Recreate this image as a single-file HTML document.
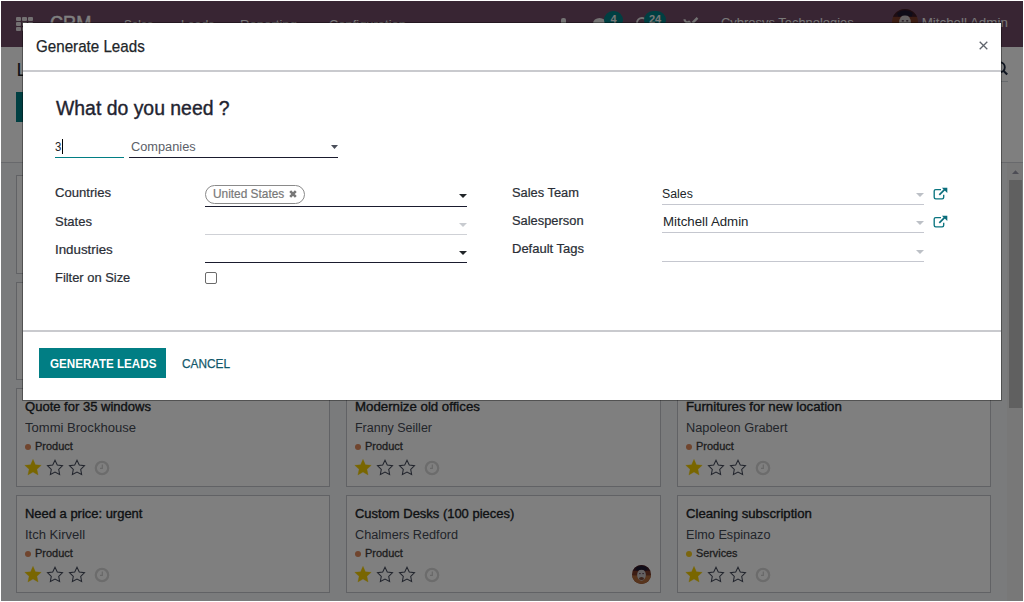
<!DOCTYPE html>
<html><head><meta charset="utf-8">
<style>
*{box-sizing:border-box}
html,body{margin:0;padding:0;background:#fff}
body{width:1024px;height:602px;position:relative;overflow:hidden;font-family:"Liberation Sans",sans-serif;color:#212529}
#scr{position:absolute;left:0;top:0;width:1024px;height:602px;clip-path:inset(1px 1px 1px 1px);background:#fff;overflow:hidden}
.a{position:absolute;white-space:nowrap;margin:0;padding:0}
.card{position:absolute;width:315px;height:99px;background:#fff;border:1px solid #c3c5cb}
</style></head><body>
<div id="scr">

<div class="a" style="left:0;top:0;width:1024px;height:47px;background:#714b67"></div>
<div class="a" style="left:16px;top:17px;width:5px;height:4px;background:#e6e0e4;border-radius:1px"></div>
<div class="a" style="left:16px;top:22px;width:5px;height:4px;background:#e6e0e4;border-radius:1px"></div>
<div class="a" style="left:16px;top:27px;width:5px;height:4px;background:#e6e0e4;border-radius:1px"></div>
<div class="a" style="left:22px;top:17px;width:5px;height:4px;background:#e6e0e4;border-radius:1px"></div>
<div class="a" style="left:22px;top:22px;width:5px;height:4px;background:#e6e0e4;border-radius:1px"></div>
<div class="a" style="left:22px;top:27px;width:5px;height:4px;background:#e6e0e4;border-radius:1px"></div>
<div class="a" style="left:28px;top:17px;width:5px;height:4px;background:#e6e0e4;border-radius:1px"></div>
<div class="a" style="left:28px;top:22px;width:5px;height:4px;background:#e6e0e4;border-radius:1px"></div>
<div class="a" style="left:28px;top:27px;width:5px;height:4px;background:#e6e0e4;border-radius:1px"></div>
<div class="a" style="left:49.70px;top:13.12px;font-size:20.64px;line-height:20.64px;color:#fff;-webkit-text-stroke:0.45px #fff;transform:scaleX(0.8796);transform-origin:0 0;">CRM</div>
<div class="a" style="left:124.40px;top:17.88px;font-size:13.37px;line-height:13.37px;color:#f2f2f2;transform:scaleX(0.8675);transform-origin:0 0;">Sales</div>
<div class="a" style="left:180.60px;top:17.88px;font-size:13.37px;line-height:13.37px;color:#f2f2f2;transform:scaleX(0.9166);transform-origin:0 0;">Leads</div>
<div class="a" style="left:240.00px;top:17.88px;font-size:13.37px;line-height:13.37px;color:#f2f2f2;transform:scaleX(0.9833);transform-origin:0 0;">Reporting</div>
<div class="a" style="left:329.00px;top:17.88px;font-size:13.37px;line-height:13.37px;color:#f2f2f2;transform:scaleX(0.9678);transform-origin:0 0;">Configuration</div>
<div class="a" style="left:720.60px;top:16.18px;font-size:13.37px;line-height:13.37px;color:#f2f2f2;transform:scaleX(0.9682);transform-origin:0 0;">Cybrosys Technologies</div>
<div class="a" style="left:921.70px;top:15.88px;font-size:13.37px;line-height:13.37px;color:#f2f2f2;">Mitchell Admin</div>
<div class="a" style="left:892px;top:9px;width:26px;height:26px;border-radius:50%;overflow:hidden"><svg width="26" height="26" viewBox="0 0 20 20" style="display:block"><rect width="20" height="20" fill="#7a3a28"/><rect x="0" y="0" width="20" height="6" fill="#3a1a28"/><rect x="0" y="11" width="20" height="9" fill="#b06a3a"/><ellipse cx="10" cy="10.5" rx="4.6" ry="6" fill="#c8c2c4"/><rect x="7.5" y="8.6" width="1.6" height="1" fill="#4a3040"/><rect x="10.9" y="8.6" width="1.6" height="1" fill="#4a3040"/><ellipse cx="10" cy="14.2" rx="2.6" ry="1.6" fill="#7a4a3a"/><path d="M4 3 Q10 -1 16 3 L15 6 Q10 4 5 6z" fill="#1e1830"/></svg></div>
<div class="a" style="left:561px;top:18px;width:5px;height:12px;background:#e6e6e6;border-radius:2px"></div>
<div class="a" style="left:593px;top:17.7px;width:13px;height:11px;background:#e6e6e6;border-radius:50%"></div>
<div class="a" style="left:604px;top:10.8px;width:19px;height:18px;background:#017e84;border-radius:9px"></div>
<div class="a" style="left:610.50px;top:14.49px;font-size:11.00px;line-height:11.00px;color:#f0f0f0;font-weight:bold;">4</div>
<div class="a" style="left:636px;top:17px;width:12px;height:12px;border:2px solid #e6e6e6;border-radius:50%"></div>
<div class="a" style="left:644px;top:10.8px;width:22px;height:18px;background:#017e84;border-radius:9px"></div>
<div class="a" style="left:649.00px;top:13.99px;font-size:11.00px;line-height:11.00px;color:#f0f0f0;font-weight:bold;">24</div>
<svg class="a" style="left:683px;top:16px" width="16" height="14" viewBox="0 0 16 14"><path d="M1.5 3.2a3 3 0 0 0 4.6 2.6l6 6" fill="none" stroke="#e6e6e6" stroke-width="2.2"/><path d="M14.5 1.8L9.5 6.8M8.5 7.8L4 12.3" stroke="#e6e6e6" stroke-width="2.4"/></svg>
<div class="a" style="left:16.50px;top:59.91px;font-size:19.00px;line-height:19.00px;color:#212529;">Leads</div>
<div class="a" style="left:16px;top:92px;width:110px;height:30px;background:#017e84"></div>
<svg class="a" style="left:990px;top:60px" width="20" height="16" viewBox="0 0 20 16"><circle cx="9.8" cy="7.2" r="5" fill="none" stroke="#1e2a40" stroke-width="1.9"/><path d="M13.4 10.8l3.8 3.6" stroke="#1e2a40" stroke-width="2.1"/></svg>
<div class="a" style="left:700px;top:81px;width:308px;height:1px;background:#ced4da"></div>
<div class="a" style="left:0;top:162px;width:1024px;height:1px;background:#d0d3d8"></div>
<div class="a" style="left:0;top:163px;width:1024px;height:439px;background:#f5f6f9"></div>
<div class="a" style="left:1007px;top:163px;width:16px;height:439px;background:#f1f1f1"></div>
<svg class="a" style="left:1011px;top:169px" width="9" height="6" viewBox="0 0 9 6"><path d="M1 5L4.5 1.2 8 5z" fill="#9a9aaa"/></svg>
<div class="a" style="left:1009px;top:180px;width:13px;height:228px;background:#c1c1c1"></div>
<div class="card" style="left:16px;top:175px;height:99px;width:314px"></div>
<div class="card" style="left:346px;top:175px;height:99px;width:315px"></div>
<div class="card" style="left:677px;top:175px;height:99px;width:314px"></div>
<div class="card" style="left:16px;top:282px;height:98px;width:314px"></div>
<div class="card" style="left:346px;top:282px;height:98px;width:315px"></div>
<div class="card" style="left:677px;top:282px;height:98px;width:314px"></div>
<div class="card" style="left:16px;top:388px;height:99px;width:314px"></div>
<div class="a" style="left:24.80px;top:400.94px;font-size:12.35px;line-height:12.35px;color:#212529;-webkit-text-stroke:0.35px #212529;transform:scaleX(1.0555);transform-origin:0 0;">Quote for 35 windows</div>
<div class="a" style="left:24.80px;top:421.25px;font-size:13.52px;line-height:13.52px;color:#454a55;transform:scaleX(0.9655);transform-origin:0 0;">Tommi Brockhouse</div>
<div class="a" style="left:25px;top:444px;width:6px;height:6px;border-radius:50%;background:#e08a5c"></div>
<div class="a" style="left:35.30px;top:441.22px;font-size:10.61px;line-height:10.61px;color:#3c3c3c;-webkit-text-stroke:0.3px #3c3c3c;transform:scaleX(1.0341);transform-origin:0 0;">Product</div>
<svg class="a" style="left:23.049999999999997px;top:457.8px" width="20" height="20" viewBox="0 0 20 20"><path d="M10.00 1.30L12.41 6.68L18.27 7.31L13.90 11.27L15.11 17.04L10.00 14.10L4.89 17.04L6.10 11.27L1.73 7.31L7.59 6.68Z" fill="#f3cc00" stroke="#f3cc00" stroke-width="0.3" stroke-linejoin="round"/></svg>
<svg class="a" style="left:45px;top:457.8px" width="20" height="20" viewBox="0 0 20 20"><path d="M10.00 2.20L12.29 6.94L17.51 7.66L13.71 11.31L14.64 16.49L10.00 14.00L5.36 16.49L6.29 11.31L2.49 7.66L7.71 6.94Z" fill="none" stroke="#464c5c" stroke-width="1.05" stroke-linejoin="miter"/></svg>
<svg class="a" style="left:67px;top:457.8px" width="20" height="20" viewBox="0 0 20 20"><path d="M10.00 2.20L12.29 6.94L17.51 7.66L13.71 11.31L14.64 16.49L10.00 14.00L5.36 16.49L6.29 11.31L2.49 7.66L7.71 6.94Z" fill="none" stroke="#464c5c" stroke-width="1.05" stroke-linejoin="miter"/></svg>
<svg class="a" style="left:92.1px;top:457.8px" width="20" height="20" viewBox="0 0 20 20"><circle cx="10" cy="10" r="6.2" fill="none" stroke="#d8d8d8" stroke-width="2.3"/><path d="M10.3 6.4v3.9H8" fill="none" stroke="#d0d0d0" stroke-width="1.2"/></svg>
<div class="card" style="left:346px;top:388px;height:99px;width:315px"></div>
<div class="a" style="left:354.80px;top:400.94px;font-size:12.35px;line-height:12.35px;color:#212529;-webkit-text-stroke:0.35px #212529;transform:scaleX(1.0729);transform-origin:0 0;">Modernize old offices</div>
<div class="a" style="left:354.80px;top:421.25px;font-size:13.52px;line-height:13.52px;color:#454a55;transform:scaleX(0.9232);transform-origin:0 0;">Franny Seiller</div>
<div class="a" style="left:355px;top:444px;width:6px;height:6px;border-radius:50%;background:#e08a5c"></div>
<div class="a" style="left:365.30px;top:441.22px;font-size:10.61px;line-height:10.61px;color:#3c3c3c;-webkit-text-stroke:0.3px #3c3c3c;transform:scaleX(1.0341);transform-origin:0 0;">Product</div>
<svg class="a" style="left:353.05px;top:457.8px" width="20" height="20" viewBox="0 0 20 20"><path d="M10.00 1.30L12.41 6.68L18.27 7.31L13.90 11.27L15.11 17.04L10.00 14.10L4.89 17.04L6.10 11.27L1.73 7.31L7.59 6.68Z" fill="#f3cc00" stroke="#f3cc00" stroke-width="0.3" stroke-linejoin="round"/></svg>
<svg class="a" style="left:375px;top:457.8px" width="20" height="20" viewBox="0 0 20 20"><path d="M10.00 2.20L12.29 6.94L17.51 7.66L13.71 11.31L14.64 16.49L10.00 14.00L5.36 16.49L6.29 11.31L2.49 7.66L7.71 6.94Z" fill="none" stroke="#464c5c" stroke-width="1.05" stroke-linejoin="miter"/></svg>
<svg class="a" style="left:397px;top:457.8px" width="20" height="20" viewBox="0 0 20 20"><path d="M10.00 2.20L12.29 6.94L17.51 7.66L13.71 11.31L14.64 16.49L10.00 14.00L5.36 16.49L6.29 11.31L2.49 7.66L7.71 6.94Z" fill="none" stroke="#464c5c" stroke-width="1.05" stroke-linejoin="miter"/></svg>
<svg class="a" style="left:422.1px;top:457.8px" width="20" height="20" viewBox="0 0 20 20"><circle cx="10" cy="10" r="6.2" fill="none" stroke="#d8d8d8" stroke-width="2.3"/><path d="M10.3 6.4v3.9H8" fill="none" stroke="#d0d0d0" stroke-width="1.2"/></svg>
<div class="card" style="left:677px;top:388px;height:99px;width:314px"></div>
<div class="a" style="left:685.80px;top:400.94px;font-size:12.35px;line-height:12.35px;color:#212529;-webkit-text-stroke:0.35px #212529;transform:scaleX(1.0714);transform-origin:0 0;">Furnitures for new location</div>
<div class="a" style="left:685.80px;top:421.25px;font-size:13.52px;line-height:13.52px;color:#454a55;transform:scaleX(0.9445);transform-origin:0 0;">Napoleon Grabert</div>
<div class="a" style="left:686px;top:444px;width:6px;height:6px;border-radius:50%;background:#e08a5c"></div>
<div class="a" style="left:696.30px;top:441.22px;font-size:10.61px;line-height:10.61px;color:#3c3c3c;-webkit-text-stroke:0.3px #3c3c3c;transform:scaleX(1.0341);transform-origin:0 0;">Product</div>
<svg class="a" style="left:684.05px;top:457.8px" width="20" height="20" viewBox="0 0 20 20"><path d="M10.00 1.30L12.41 6.68L18.27 7.31L13.90 11.27L15.11 17.04L10.00 14.10L4.89 17.04L6.10 11.27L1.73 7.31L7.59 6.68Z" fill="#f3cc00" stroke="#f3cc00" stroke-width="0.3" stroke-linejoin="round"/></svg>
<svg class="a" style="left:706px;top:457.8px" width="20" height="20" viewBox="0 0 20 20"><path d="M10.00 2.20L12.29 6.94L17.51 7.66L13.71 11.31L14.64 16.49L10.00 14.00L5.36 16.49L6.29 11.31L2.49 7.66L7.71 6.94Z" fill="none" stroke="#464c5c" stroke-width="1.05" stroke-linejoin="miter"/></svg>
<svg class="a" style="left:728px;top:457.8px" width="20" height="20" viewBox="0 0 20 20"><path d="M10.00 2.20L12.29 6.94L17.51 7.66L13.71 11.31L14.64 16.49L10.00 14.00L5.36 16.49L6.29 11.31L2.49 7.66L7.71 6.94Z" fill="none" stroke="#464c5c" stroke-width="1.05" stroke-linejoin="miter"/></svg>
<svg class="a" style="left:753.1px;top:457.8px" width="20" height="20" viewBox="0 0 20 20"><circle cx="10" cy="10" r="6.2" fill="none" stroke="#d8d8d8" stroke-width="2.3"/><path d="M10.3 6.4v3.9H8" fill="none" stroke="#d0d0d0" stroke-width="1.2"/></svg>
<div class="card" style="left:16px;top:495px;height:98px;width:314px"></div>
<div class="a" style="left:24.80px;top:507.94px;font-size:12.35px;line-height:12.35px;color:#212529;-webkit-text-stroke:0.35px #212529;transform:scaleX(1.0497);transform-origin:0 0;">Need a price: urgent</div>
<div class="a" style="left:24.80px;top:528.25px;font-size:13.52px;line-height:13.52px;color:#454a55;transform:scaleX(0.9628);transform-origin:0 0;">Itch Kirvell</div>
<div class="a" style="left:25px;top:551px;width:6px;height:6px;border-radius:50%;background:#e08a5c"></div>
<div class="a" style="left:35.30px;top:548.22px;font-size:10.61px;line-height:10.61px;color:#3c3c3c;-webkit-text-stroke:0.3px #3c3c3c;transform:scaleX(1.0341);transform-origin:0 0;">Product</div>
<svg class="a" style="left:23.049999999999997px;top:564.8px" width="20" height="20" viewBox="0 0 20 20"><path d="M10.00 1.30L12.41 6.68L18.27 7.31L13.90 11.27L15.11 17.04L10.00 14.10L4.89 17.04L6.10 11.27L1.73 7.31L7.59 6.68Z" fill="#f3cc00" stroke="#f3cc00" stroke-width="0.3" stroke-linejoin="round"/></svg>
<svg class="a" style="left:45px;top:564.8px" width="20" height="20" viewBox="0 0 20 20"><path d="M10.00 2.20L12.29 6.94L17.51 7.66L13.71 11.31L14.64 16.49L10.00 14.00L5.36 16.49L6.29 11.31L2.49 7.66L7.71 6.94Z" fill="none" stroke="#464c5c" stroke-width="1.05" stroke-linejoin="miter"/></svg>
<svg class="a" style="left:67px;top:564.8px" width="20" height="20" viewBox="0 0 20 20"><path d="M10.00 2.20L12.29 6.94L17.51 7.66L13.71 11.31L14.64 16.49L10.00 14.00L5.36 16.49L6.29 11.31L2.49 7.66L7.71 6.94Z" fill="none" stroke="#464c5c" stroke-width="1.05" stroke-linejoin="miter"/></svg>
<svg class="a" style="left:92.1px;top:564.8px" width="20" height="20" viewBox="0 0 20 20"><circle cx="10" cy="10" r="6.2" fill="none" stroke="#d8d8d8" stroke-width="2.3"/><path d="M10.3 6.4v3.9H8" fill="none" stroke="#d0d0d0" stroke-width="1.2"/></svg>
<div class="card" style="left:346px;top:495px;height:98px;width:315px"></div>
<div class="a" style="left:354.80px;top:507.94px;font-size:12.35px;line-height:12.35px;color:#212529;-webkit-text-stroke:0.35px #212529;transform:scaleX(1.0502);transform-origin:0 0;">Custom Desks (100 pieces)</div>
<div class="a" style="left:354.80px;top:528.25px;font-size:13.52px;line-height:13.52px;color:#454a55;transform:scaleX(0.9390);transform-origin:0 0;">Chalmers Redford</div>
<div class="a" style="left:355px;top:551px;width:6px;height:6px;border-radius:50%;background:#e08a5c"></div>
<div class="a" style="left:365.30px;top:548.22px;font-size:10.61px;line-height:10.61px;color:#3c3c3c;-webkit-text-stroke:0.3px #3c3c3c;transform:scaleX(1.0341);transform-origin:0 0;">Product</div>
<svg class="a" style="left:353.05px;top:564.8px" width="20" height="20" viewBox="0 0 20 20"><path d="M10.00 1.30L12.41 6.68L18.27 7.31L13.90 11.27L15.11 17.04L10.00 14.10L4.89 17.04L6.10 11.27L1.73 7.31L7.59 6.68Z" fill="#f3cc00" stroke="#f3cc00" stroke-width="0.3" stroke-linejoin="round"/></svg>
<svg class="a" style="left:375px;top:564.8px" width="20" height="20" viewBox="0 0 20 20"><path d="M10.00 2.20L12.29 6.94L17.51 7.66L13.71 11.31L14.64 16.49L10.00 14.00L5.36 16.49L6.29 11.31L2.49 7.66L7.71 6.94Z" fill="none" stroke="#464c5c" stroke-width="1.05" stroke-linejoin="miter"/></svg>
<svg class="a" style="left:397px;top:564.8px" width="20" height="20" viewBox="0 0 20 20"><path d="M10.00 2.20L12.29 6.94L17.51 7.66L13.71 11.31L14.64 16.49L10.00 14.00L5.36 16.49L6.29 11.31L2.49 7.66L7.71 6.94Z" fill="none" stroke="#464c5c" stroke-width="1.05" stroke-linejoin="miter"/></svg>
<svg class="a" style="left:422.1px;top:564.8px" width="20" height="20" viewBox="0 0 20 20"><circle cx="10" cy="10" r="6.2" fill="none" stroke="#d8d8d8" stroke-width="2.3"/><path d="M10.3 6.4v3.9H8" fill="none" stroke="#d0d0d0" stroke-width="1.2"/></svg>
<div class="a" style="left:632px;top:565px;width:19px;height:19px;border-radius:50%;overflow:hidden"><svg width="19" height="19" viewBox="0 0 20 20" style="display:block"><rect width="20" height="20" fill="#7a3a28"/><rect x="0" y="0" width="20" height="6" fill="#3a1a28"/><rect x="0" y="11" width="20" height="9" fill="#b06a3a"/><ellipse cx="10" cy="10.5" rx="4.6" ry="6" fill="#c8c2c4"/><rect x="7.5" y="8.6" width="1.6" height="1" fill="#4a3040"/><rect x="10.9" y="8.6" width="1.6" height="1" fill="#4a3040"/><ellipse cx="10" cy="14.2" rx="2.6" ry="1.6" fill="#7a4a3a"/><path d="M4 3 Q10 -1 16 3 L15 6 Q10 4 5 6z" fill="#1e1830"/></svg></div>
<div class="card" style="left:677px;top:495px;height:98px;width:314px"></div>
<div class="a" style="left:685.80px;top:507.94px;font-size:12.35px;line-height:12.35px;color:#212529;-webkit-text-stroke:0.35px #212529;transform:scaleX(1.0668);transform-origin:0 0;">Cleaning subscription</div>
<div class="a" style="left:685.80px;top:528.25px;font-size:13.52px;line-height:13.52px;color:#454a55;transform:scaleX(0.9372);transform-origin:0 0;">Elmo Espinazo</div>
<div class="a" style="left:686px;top:551px;width:6px;height:6px;border-radius:50%;background:#f7cd1f"></div>
<div class="a" style="left:696.30px;top:548.22px;font-size:10.61px;line-height:10.61px;color:#3c3c3c;-webkit-text-stroke:0.3px #3c3c3c;transform:scaleX(1.0199);transform-origin:0 0;">Services</div>
<svg class="a" style="left:684.05px;top:564.8px" width="20" height="20" viewBox="0 0 20 20"><path d="M10.00 1.30L12.41 6.68L18.27 7.31L13.90 11.27L15.11 17.04L10.00 14.10L4.89 17.04L6.10 11.27L1.73 7.31L7.59 6.68Z" fill="#f3cc00" stroke="#f3cc00" stroke-width="0.3" stroke-linejoin="round"/></svg>
<svg class="a" style="left:706px;top:564.8px" width="20" height="20" viewBox="0 0 20 20"><path d="M10.00 2.20L12.29 6.94L17.51 7.66L13.71 11.31L14.64 16.49L10.00 14.00L5.36 16.49L6.29 11.31L2.49 7.66L7.71 6.94Z" fill="none" stroke="#464c5c" stroke-width="1.05" stroke-linejoin="miter"/></svg>
<svg class="a" style="left:728px;top:564.8px" width="20" height="20" viewBox="0 0 20 20"><path d="M10.00 2.20L12.29 6.94L17.51 7.66L13.71 11.31L14.64 16.49L10.00 14.00L5.36 16.49L6.29 11.31L2.49 7.66L7.71 6.94Z" fill="none" stroke="#464c5c" stroke-width="1.05" stroke-linejoin="miter"/></svg>
<svg class="a" style="left:753.1px;top:564.8px" width="20" height="20" viewBox="0 0 20 20"><circle cx="10" cy="10" r="6.2" fill="none" stroke="#d8d8d8" stroke-width="2.3"/><path d="M10.3 6.4v3.9H8" fill="none" stroke="#d0d0d0" stroke-width="1.2"/></svg>
<div class="a" style="left:0;top:0;width:1024px;height:602px;background:rgba(0,0,0,.5)"></div>
<div class="a" style="left:22px;top:22px;width:980px;height:379px;background:#fff;background-clip:padding-box;border:1px solid rgba(0,0,0,.35)"></div>
<div class="a" style="left:35.75px;top:38.20px;font-size:17.01px;line-height:17.01px;color:#212529;-webkit-text-stroke:0.25px #212529;transform:scaleX(0.8919);transform-origin:0 0;">Generate Leads</div>
<svg class="a" style="left:979px;top:41px" width="9" height="9" viewBox="0 0 9 9"><path d="M0.7 0.7L8.3 8.3M8.3 0.7L0.7 8.3" stroke="#5f646c" stroke-width="1.3"/></svg>
<div class="a" style="left:23px;top:70px;width:978px;height:2px;background:#c9cace"></div>
<div class="a" style="left:55.60px;top:97.67px;font-size:20.35px;line-height:20.35px;color:#1f2430;-webkit-text-stroke:0.4px #1f2430;transform:scaleX(0.9537);transform-origin:0 0;">What do you need ?</div>
<div class="a" style="left:55.30px;top:139.68px;font-size:13.37px;line-height:13.37px;color:#212529;transform:scaleX(0.8489);transform-origin:0 0;">3</div>
<div class="a" style="left:62px;top:139px;width:1px;height:15px;background:#000"></div>
<div class="a" style="left:55px;top:157px;width:69px;height:1px;background:#017e84"></div>
<div class="a" style="left:130.60px;top:139.80px;font-size:13.23px;line-height:13.23px;color:#5c6068;transform:scaleX(0.9667);transform-origin:0 0;">Companies</div>
<div class="a" style="left:129px;top:157px;width:209px;height:1px;background:#1a1b2e"></div>
<svg class="a" style="left:331px;top:145px" width="7" height="4" viewBox="0 0 7 4"><path d="M0 0h7L3.5 4z" fill="#4a4f5a"/></svg>
<div class="a" style="left:54.70px;top:185.68px;font-size:13.37px;line-height:13.37px;color:#2a2e36;-webkit-text-stroke:0.22px #2a2e36;transform:scaleX(0.9802);transform-origin:0 0;">Countries</div>
<div class="a" style="left:54.70px;top:214.88px;font-size:13.37px;line-height:13.37px;color:#2a2e36;-webkit-text-stroke:0.22px #2a2e36;transform:scaleX(0.9760);transform-origin:0 0;">States</div>
<div class="a" style="left:54.70px;top:242.90px;font-size:13.23px;line-height:13.23px;color:#2a2e36;-webkit-text-stroke:0.22px #2a2e36;transform:scaleX(1.0080);transform-origin:0 0;">Industries</div>
<div class="a" style="left:54.70px;top:271.00px;font-size:13.23px;line-height:13.23px;color:#2a2e36;-webkit-text-stroke:0.22px #2a2e36;transform:scaleX(0.9756);transform-origin:0 0;">Filter on Size</div>
<div class="a" style="left:511.90px;top:185.55px;font-size:13.52px;line-height:13.52px;color:#2a2e36;-webkit-text-stroke:0.22px #2a2e36;transform:scaleX(0.9508);transform-origin:0 0;">Sales Team</div>
<div class="a" style="left:511.90px;top:213.82px;font-size:13.08px;line-height:13.08px;color:#2a2e36;-webkit-text-stroke:0.22px #2a2e36;transform:scaleX(0.9844);transform-origin:0 0;">Salesperson</div>
<div class="a" style="left:511.90px;top:242.57px;font-size:12.79px;line-height:12.79px;color:#2a2e36;-webkit-text-stroke:0.22px #2a2e36;transform:scaleX(1.0175);transform-origin:0 0;">Default Tags</div>
<div class="a" style="left:205px;top:185px;width:100px;height:19px;border:1px solid #8a8a8a;border-radius:10px"></div>
<div class="a" style="left:212.70px;top:188.07px;font-size:12.79px;line-height:12.79px;color:#787878;-webkit-text-stroke:0.2px #787878;transform:scaleX(0.9283);transform-origin:0 0;">United States</div>
<svg class="a" style="left:289px;top:190px" width="8" height="8" viewBox="0 0 8 8"><path d="M1.2 1.2L6.8 6.8M6.8 1.2L1.2 6.8" stroke="#777" stroke-width="2.6"/></svg>
<div class="a" style="left:205px;top:206px;width:262px;height:1px;background:#1a1b2e"></div>
<svg class="a" style="left:459px;top:194px" width="8" height="4" viewBox="0 0 8 4"><path d="M0 0h8L4 4z" fill="#212529"/></svg>
<div class="a" style="left:205px;top:234px;width:262px;height:1px;background:#cfd1d6"></div>
<svg class="a" style="left:459px;top:223px" width="8" height="4" viewBox="0 0 8 4"><path d="M0 0h8L4 4z" fill="#c8cbd0"/></svg>
<div class="a" style="left:205px;top:262px;width:262px;height:1px;background:#1a1b2e"></div>
<svg class="a" style="left:459px;top:251px" width="8" height="4" viewBox="0 0 8 4"><path d="M0 0h8L4 4z" fill="#212529"/></svg>
<div class="a" style="left:205px;top:272px;width:12px;height:12px;border:1px solid #6a6a6a;border-radius:2px;background:#fff"></div>
<div class="a" style="left:662.30px;top:186.65px;font-size:13.52px;line-height:13.52px;color:#212529;transform:scaleX(0.9114);transform-origin:0 0;">Sales</div>
<div class="a" style="left:662.80px;top:214.58px;font-size:13.37px;line-height:13.37px;color:#212529;transform:scaleX(0.9921);transform-origin:0 0;">Mitchell Admin</div>
<div class="a" style="left:662px;top:204px;width:262px;height:1px;background:#c5c7cf"></div>
<div class="a" style="left:662px;top:232px;width:262px;height:1px;background:#c5c7cf"></div>
<div class="a" style="left:662px;top:261px;width:262px;height:1px;background:#c5c7cf"></div>
<svg class="a" style="left:916px;top:193px" width="8" height="4" viewBox="0 0 8 4"><path d="M0 0h8L4 4z" fill="#bcc0c6"/></svg>
<svg class="a" style="left:916px;top:221px" width="8" height="4" viewBox="0 0 8 4"><path d="M0 0h8L4 4z" fill="#bcc0c6"/></svg>
<svg class="a" style="left:916px;top:250px" width="8" height="4" viewBox="0 0 8 4"><path d="M0 0h8L4 4z" fill="#bcc0c6"/></svg>
<svg class="a" style="left:933px;top:186px" width="15" height="14" viewBox="0 0 15 14"><path d="M8 3.6H2.7a1.5 1.5 0 0 0-1.5 1.5v6.2a1.5 1.5 0 0 0 1.5 1.5h6.5a1.5 1.5 0 0 0 1.5-1.5V8.7" fill="none" stroke="#0b7580" stroke-width="1.35"/><path d="M6.3 8.8L12 3.1" stroke="#0b6e7c" stroke-width="1.7"/><path d="M8.9 1.7H14.3V7.1z" fill="#0b6e7c"/></svg>
<svg class="a" style="left:933px;top:214px" width="15" height="14" viewBox="0 0 15 14"><path d="M8 3.6H2.7a1.5 1.5 0 0 0-1.5 1.5v6.2a1.5 1.5 0 0 0 1.5 1.5h6.5a1.5 1.5 0 0 0 1.5-1.5V8.7" fill="none" stroke="#0b7580" stroke-width="1.35"/><path d="M6.3 8.8L12 3.1" stroke="#0b6e7c" stroke-width="1.7"/><path d="M8.9 1.7H14.3V7.1z" fill="#0b6e7c"/></svg>
<div class="a" style="left:23px;top:330px;width:978px;height:2px;background:#c9cace"></div>
<div class="a" style="left:39px;top:348px;width:127px;height:30px;background:#017e84"></div>
<div class="a" style="left:49.60px;top:357.57px;font-size:12.79px;line-height:12.79px;color:#fff;font-weight:bold;transform:scaleX(0.9100);transform-origin:0 0;">GENERATE LEADS</div>
<div class="a" style="left:182.00px;top:357.57px;font-size:12.79px;line-height:12.79px;color:#12586a;-webkit-text-stroke:0.25px #12586a;transform:scaleX(0.9254);transform-origin:0 0;">CANCEL</div>
</div></body></html>
